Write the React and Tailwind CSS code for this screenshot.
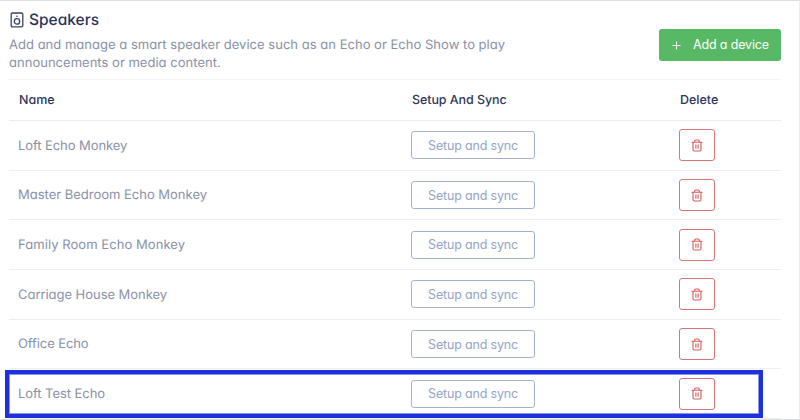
const devices = [
  { name: 'Loft Echo Monkey', tracking: 'tracking-[-0.080px]' },
  { name: 'Master Bedroom Echo Monkey', tracking: 'tracking-[-0.010px]' },
  { name: 'Family Room Echo Monkey', tracking: 'tracking-[0.060px]' },
  { name: 'Carriage House Monkey', tracking: 'tracking-[-0.040px]' },
  { name: 'Office Echo', tracking: 'tracking-[-0.100px]' },
  { name: 'Loft Test Echo', tracking: 'tracking-[-0.060px]' },
];

function SpeakerIcon() {
  return (
    <svg width="14" height="16" viewBox="0 0 14 16" fill="none" stroke="#3a4263" strokeWidth="1.3">
      <rect x="1.200" y="1" width="11.600" height="13.800" rx="1.3" />
      <circle cx="7" cy="9.4" r="2.7" />
      <circle cx="7" cy="4.2" r="0.8" fill="#3a4263" stroke="none" />
    </svg>
  );
}

function TrashIcon() {
  return (
    <svg width="12" height="13" viewBox="0 0 12 13" fill="none" stroke="#d65a5a" strokeWidth="1.1" strokeLinecap="round">
      <path d="M1 3.3h10M3.7 3.1V2.2Q3.7 1 4.9 1h2.2Q8.3 1 8.3 2.2v.9M2 3.5v7Q2 12 3.5 12h5Q10 12 10 10.500v-7" />
      <path d="M4.900 5.700v3.600M7.100 5.700v3.600" />
    </svg>
  );
}

export default function App() {
  return (
    <div className="relative h-[420px] w-[800px] overflow-hidden border-t border-r border-b border-t-[#dfdfe2] border-r-[#ededf1] border-b-[#dcdde2] bg-white pl-[9px] pr-[18px] font-[Inter,sans-serif] text-[#8991a6] [font-feature-settings:'cv11'] [text-rendering:geometricPrecision]">
      <header className="flex h-[78px] justify-between">
        <div className="pt-[9px]">
          <h1 className="flex h-5 items-center gap-[5px] pl-px text-[15.5px] font-medium text-[#2b3357]">
            <SpeakerIcon />
            <span>Speakers</span>
          </h1>
          <p className="pt-[7px] text-[13px] leading-[17.500px] tracking-[0.020px] whitespace-nowrap">
            Add and manage a smart speaker device such as an Echo or Echo Show to play
            <br />
            announcements or media content.
          </p>
        </div>
        <button className="mt-7 flex h-[32px] w-[122px] items-center rounded-[3px] bg-[#57b865] pl-[13px] text-[12.500px] tracking-[-0.150px] text-white">
          <svg width="9" height="9" viewBox="0 0 9 9" stroke="white" strokeWidth="1.1">
            <path d="M4.500 .5v8M.5 4.500h8" />
          </svg>
          <span className="ml-[12px] whitespace-nowrap">Add a device</span>
        </button>
      </header>
      <div className="grid h-[42px] grid-cols-[402px_268px_1fr] items-center border-y border-t-[#f4f4f7] border-b-[#ebecf0] text-[12.500px] font-medium text-[#2f3759]">
        <span className="pt-[2px] pl-[10px]">Name</span>
        <span className="pt-[2px] pl-px tracking-[-0.080px]">Setup And Sync</span>
        <span className="pt-[2px] pl-[1px]">Delete</span>
      </div>
      {devices.map((d) => (
        <div key={d.name} className="grid h-[49.700px] grid-cols-[402px_268px_1fr] items-center border-b border-[#edeef2] last:border-0">
          <span className={'pt-[2px] pl-[9px] text-[13px] whitespace-nowrap ' + d.tracking}>{d.name}</span>
          <button className="h-[28px] w-[124px] rounded-[3px] border border-[#a3b3cf] pt-[2px] text-[12.500px] tracking-[-0.170px] text-[#92a5c5]">
            Setup and sync
          </button>
          <button aria-label="Delete" className="flex h-[32px] w-[36px] items-center justify-center rounded-[3px] border border-[#d87575]">
            <TrashIcon />
          </button>
        </div>
      ))}
      <div className="pointer-events-none absolute top-[369px] left-[5px] h-[48px] w-[758px] border-4 border-[#1c31dc] shadow-[inset_0_0_0_1px_#8792ea]" />
    </div>
  );
}
